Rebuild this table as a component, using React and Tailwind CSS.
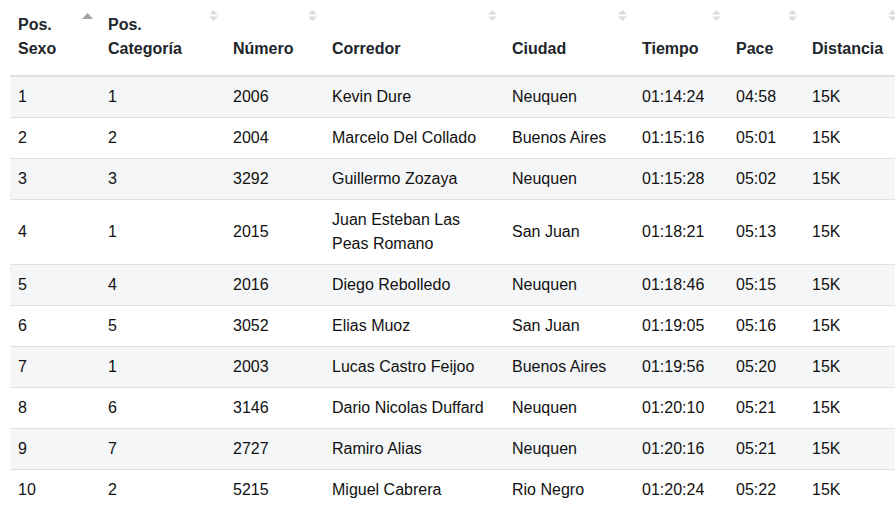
import React from "react";

const rows = [
  ["1", "1", "2006", "Kevin Dure", "Neuquen", "01:14:24", "04:58", "15K"],
  ["2", "2", "2004", "Marcelo Del Collado", "Buenos Aires", "01:15:16", "05:01", "15K"],
  ["3", "3", "3292", "Guillermo Zozaya", "Neuquen", "01:15:28", "05:02", "15K"],
  ["4", "1", "2015", "Juan Esteban Las Peas Romano", "San Juan", "01:18:21", "05:13", "15K"],
  ["5", "4", "2016", "Diego Rebolledo", "Neuquen", "01:18:46", "05:15", "15K"],
  ["6", "5", "3052", "Elias Muoz", "San Juan", "01:19:05", "05:16", "15K"],
  ["7", "1", "2003", "Lucas Castro Feijoo", "Buenos Aires", "01:19:56", "05:20", "15K"],
  ["8", "6", "3146", "Dario Nicolas Duffard", "Neuquen", "01:20:10", "05:21", "15K"],
  ["9", "7", "2727", "Ramiro Alias", "Neuquen", "01:20:16", "05:21", "15K"],
  ["10", "2", "5215", "Miguel Cabrera", "Rio Negro", "01:20:24", "05:22", "15K"],
];

const headers = [
  { label: ["Pos.", "Sexo"], w: "w-[90px]", active: true },
  { label: ["Pos.", "Categoría"], w: "w-[125px]" },
  { label: ["Número"], w: "w-[99px]" },
  { label: ["Corredor"], w: "w-[180px]" },
  { label: ["Ciudad"], w: "w-[130px]" },
  { label: ["Tiempo"], w: "w-[94px]" },
  { label: ["Pace"], w: "w-[76px]" },
  { label: ["Distancia"], w: "w-[100px]" },
];

function SortIcon({ active }) {
  if (active) {
    return (
      <svg width="11" height="6" viewBox="0 0 11 6" className="absolute right-[7px] top-[13px]">
        <path d="M5.5 0 L11 6 L0 6 Z" fill="#a3a3a3" />
      </svg>
    );
  }
  return (
    <svg width="9" height="11" viewBox="0 0 9 11" className="absolute right-[7px] top-[10px]">
      <path d="M4.5 0 L9 4.5 L0 4.5 Z" fill="#dcdcdc" />
      <path d="M4.5 11 L9 6.5 L0 6.5 Z" fill="#dcdcdc" />
    </svg>
  );
}

export default function App() {
  return (
    <div className="w-[895px] h-[522px] overflow-hidden bg-white font-['Liberation_Sans',Arial,sans-serif] text-[16px] leading-[24px]">
      <div className="pl-[10px]">
        <table className="table-fixed border-collapse w-[894px]">
          <thead>
            <tr className="border-b-2 border-[#dee2e6]">
              {headers.map((h, i) => (
                <th
                  key={i}
                  className={`${h.w} relative text-left align-bottom font-bold text-[#212529] px-[8px] pt-[13px] pb-[14px]`}
                >
                  {h.label.map((l, j) => (
                    <div key={j}>{l}</div>
                  ))}
                  <SortIcon active={h.active} />
                </th>
              ))}
            </tr>
          </thead>
          <tbody>
            {rows.map((r, i) => (
              <tr
                key={i}
                className={`border-t border-[#dee2e6] ${i % 2 === 0 ? "bg-[#f5f6f7]" : "bg-white"}`}
              >
                {r.map((c, j) => (
                  <td key={j} className="px-[8px] py-[8px] align-middle text-[#111]">
                    {c}
                  </td>
                ))}
              </tr>
            ))}
          </tbody>
        </table>
      </div>
    </div>
  );
}
